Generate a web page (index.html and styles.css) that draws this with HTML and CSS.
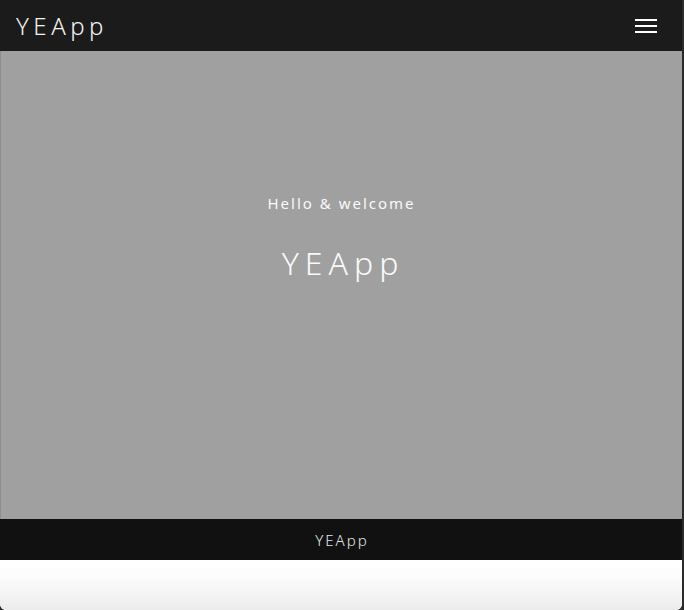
FILE: index.html
```html
<!DOCTYPE html>
<html lang="en">
<head>
<meta charset="utf-8">
<title>YEApp</title>
<link rel="stylesheet" href="styles.css">
</head>
<body>
<div class="window">
  <header class="topbar">
    <div class="brand">YEApp</div>
    <button class="menu" aria-label="Menu">
      <svg width="22" height="14" viewBox="0 0 22 14"><rect x="0" y="0" width="22" height="2" fill="#fff"/><rect x="0" y="6" width="22" height="2" fill="#fff"/><rect x="0" y="12" width="22" height="2" fill="#fff"/></svg>
    </button>
  </header>
  <main class="hero">
    <p class="greeting">Hello &amp; welcome</p>
    <h1 class="title">YEApp</h1>
  </main>
  <footer class="footer">YEApp</footer>
  <div class="below"></div>
</div>
</body>
</html>
```

FILE: styles.css
```css
html, body {
  margin: 0;
  padding: 0;
  height: 100%;
  background: #2a2a2a;
}
body {
  font-family: "Noto Sans", "Open Sans", sans-serif;
}
.window {
  width: 682px;
  height: 610px;
  display: flex;
  flex-direction: column;
  border-radius: 0 0 6px 6px;
  overflow: hidden;
  background: #fff;
}
.topbar {
  height: 51px;
  flex: none;
  background: #1b1b1b;
  display: flex;
  align-items: center;
  justify-content: space-between;
  padding: 0 25px 0 16px;
  box-sizing: border-box;
}
.brand {
  color: #f4f4f4;
  font-size: 24px;
  font-weight: 300;
  letter-spacing: 4.5px;
  line-height: 1;
  margin-top: 1px;
}
.menu {
  background: none;
  border: 0;
  padding: 0;
  width: 22px;
  height: 14px;
  display: block;
  margin-top: 1px;
}
.menu svg { display: block; }
.hero {
  height: 468px;
  flex: none;
  background: #a0a0a0;
  border-left: 1px solid #8e8e8e;
  box-sizing: border-box;
  display: flex;
  flex-direction: column;
  align-items: center;
  justify-content: flex-start;
  padding-top: 141px;
  color: #fafafa;
}
.greeting {
  margin: 0;
  font-size: 15px;
  letter-spacing: 2px;
  line-height: 22px;
  font-weight: 400;
}
.title {
  margin: 29px 0 0;
  font-size: 32px;
  font-weight: 300;
  letter-spacing: 6px;
  line-height: 40px;
  padding-left: 3px;
}
.footer {
  height: 41px;
  flex: none;
  background: #111;
  color: #e6e6e6;
  font-size: 15px;
  font-weight: 300;
  letter-spacing: 2px;
  display: flex;
  align-items: center;
  justify-content: center;
  padding-left: 2px;
}
.below {
  flex: 1;
  background: linear-gradient(#fff, #fdfdfd 30%, #ececec);
}
```
